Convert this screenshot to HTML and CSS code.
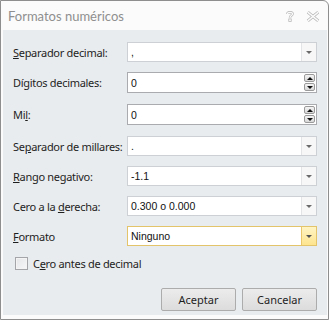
FILE: index.html
```html
<!DOCTYPE html>
<html>

<head>
    <meta charset="utf-8">
    <title>Formatos numéricos</title>
    <link rel="stylesheet" href="styles.css">
</head>

<body>
    <div class="window">
        <div class="titlebar">
            <span class="title">Formatos numéricos</span>
            <div class="caption-buttons">
                <svg class="cap-icon" viewBox="0 0 12 14">
                    <path d="M3 4.5 C3 2 9 2 9 4.5 C9 6.5 6 6.5 6 9" fill="none" stroke="#b4b4b4" stroke-width="3" />
                    <path d="M3 4.5 C3 2 9 2 9 4.5 C9 6.5 6 6.5 6 9" fill="none" stroke="#fbfbfb" stroke-width="1.5" />
                    <rect x="4.5" y="10.5" width="3" height="3" fill="#fbfbfb" stroke="#b4b4b4" stroke-width="0.9" />
                </svg>
                <svg class="cap-icon close" viewBox="0 0 16 12">
                    <path d="M2 1 L14 11 M14 1 L2 11" stroke="#b4b4b4" stroke-width="3.4" />
                    <path d="M2 1 L14 11 M14 1 L2 11" stroke="#fbfbfb" stroke-width="1.6" />
                </svg>
            </div>
        </div>

        <div class="client">
            <div class="form-rows">
                <div class="row">
                    <label class="label"><u>S</u>eparador decimal:</label>
                    <div class="combo"><span class="value">,</span><span class="drop"><i class="arrow"></i></span></div>
                </div>
                <div class="row spin-row">
                    <label class="label">Dígitos decimales:</label>
                    <div class="spin">
                        <span class="value">0</span>
                        <span class="spin-buttons">
                            <span class="spin-btn"><i class="up"></i></span>
                            <span class="spin-btn"><i class="down"></i></span>
                        </span>
                    </div>
                </div>
                <div class="row spin-row">
                    <label class="label">Mi<u>l</u>:</label>
                    <div class="spin">
                        <span class="value">0</span>
                        <span class="spin-buttons">
                            <span class="spin-btn"><i class="up"></i></span>
                            <span class="spin-btn"><i class="down"></i></span>
                        </span>
                    </div>
                </div>
                <div class="row">
                    <label class="label">Se<u>p</u>arador de millares:</label>
                    <div class="combo"><span class="value">.</span><span class="drop"><i class="arrow"></i></span></div>
                </div>
                <div class="row">
                    <label class="label"><u>R</u>ango negativo:</label>
                    <div class="combo"><span class="value">-1.1</span><span class="drop"><i class="arrow"></i></span></div>
                </div>
                <div class="row">
                    <label class="label">Cero a la <u>d</u>erecha:</label>
                    <div class="combo"><span class="value">0.300 o 0.000</span><span class="drop"><i class="arrow"></i></span></div>
                </div>
                <div class="row">
                    <label class="label"><u>F</u>ormato</label>
                    <div class="combo hot"><span class="value">Ninguno</span><span class="drop"><i class="arrow"></i></span></div>
                </div>
            </div>

            <label class="check-row">
                <span class="checkbox"></span>
                <span>C<u>e</u>ro antes de decimal</span>
            </label>

            <div class="buttons">
                <button class="btn">Aceptar</button>
                <button class="btn">Cancelar</button>
            </div>
        </div>
    </div>
</body>

</html>
```

FILE: styles.css
```css
:root {
    --frame-border: #8e8e8e;
    --frame-bg: #fbfbfb;
    --client-bg: #e9ecee;
    --label-color: #1e1e1e;
    --combo-border: #cdd0d4;
    --spin-border: #a9abae;
}

body {
    margin: 0;
    font-family: "Noto Sans", "Open Sans", sans-serif;
    background: #ffffff;
}

.window {
    width: 329px;
    height: 320px;
    box-sizing: border-box;
    border: 1px solid var(--frame-border);
    border-radius: 0 6px 0 0;
    background: var(--frame-bg);
    display: flex;
    flex-direction: column;
    overflow: hidden;
}

.titlebar {
    height: 29px;
    display: flex;
    align-items: center;
    padding: 0 8px 0 7px;
    flex-shrink: 0;
}

.title {
    flex: 1;
    font-family: Lato, "Noto Sans", sans-serif;
    font-size: 13px;
    color: #8f8f8f;
}

.caption-buttons {
    display: flex;
    align-items: center;
    gap: 11px;
    padding-top: 1px;
}

.cap-icon {
    width: 10px;
    height: 12px;
}

.cap-icon.close {
    width: 14px;
    height: 11px;
}

.client {
    flex: 1;
    margin: 0 1px 4px 2px;
    background: var(--client-bg);
    padding: 12px 10px 0 10px;
    display: flex;
    flex-direction: column;
}

.form-rows {
    display: flex;
    flex-direction: column;
    gap: 10px;
}

.row {
    display: flex;
    align-items: center;
    height: 20px;
}

.row.spin-row {
    height: 21px;
    margin-bottom: 1px;
}

.label {
    width: 114px;
    flex-shrink: 0;
    white-space: nowrap;
    font-size: 11px;
    letter-spacing: -0.3px;
    color: var(--label-color);
}

.combo,
.spin {
    flex: 1;
    height: 100%;
    box-sizing: border-box;
    display: flex;
    align-items: stretch;
    background: #ffffff;
    border: 1px solid var(--combo-border);
}

.spin {
    border-color: var(--spin-border);
}

.value {
    flex: 1;
    display: flex;
    align-items: center;
    padding-left: 3px;
    font-family: "Liberation Sans", Arial, sans-serif;
    font-size: 10.5px;
    color: #111;
}

.drop {
    width: 14px;
    border-left: 1px solid #e2e4e6;
    background: #f7f7f7;
    display: flex;
    align-items: center;
    justify-content: center;
}

.arrow {
    width: 0;
    height: 0;
    border-left: 3px solid transparent;
    border-right: 3px solid transparent;
    border-top: 3px solid #6a6a6a;
}

.combo.hot {
    border-color: #e4c46a;
}

.combo.hot .drop {
    background: linear-gradient(#fff4c4, #fde48e);
    border-left-color: #e9c76a;
}

.combo.hot .arrow {
    border-top-color: #555;
}

.spin-buttons {
    width: 11px;
    margin: 1px 1px 1px 0;
    display: flex;
    flex-direction: column;
    gap: 1px;
}

.spin-btn {
    flex: 1;
    border: 1px solid #9a9a9a;
    border-radius: 2px;
    background: linear-gradient(#f4f4f4, #d8d8d8);
    display: flex;
    align-items: center;
    justify-content: center;
}

.up {
    width: 0;
    height: 0;
    border-left: 3px solid transparent;
    border-right: 3px solid transparent;
    border-bottom: 3px solid #111;
}

.down {
    width: 0;
    height: 0;
    border-left: 3px solid transparent;
    border-right: 3px solid transparent;
    border-top: 3px solid #111;
}

.check-row {
    display: flex;
    align-items: center;
    gap: 5px;
    margin-top: 10px;
    padding-left: 2px;
    font-size: 11px;
    letter-spacing: -0.3px;
    color: var(--label-color);
}

.checkbox {
    width: 11px;
    height: 11px;
    border: 1px solid #a3a5a8;
    background: linear-gradient(135deg, #e4e6e8, #f6f7f8);
    box-shadow: inset 0 0 0 1px #f4f4f4;
}

.buttons {
    display: flex;
    justify-content: flex-end;
    gap: 6px;
    margin-top: 17px;
}

.btn {
    width: 75px;
    height: 23px;
    border: 1px solid #acacac;
    border-radius: 2px;
    background: linear-gradient(#ececec, #dcdcdc);
    font-family: "Noto Sans", "Open Sans", sans-serif;
    font-size: 11px;
    color: #1e1e1e;
    padding: 0;
}
```
